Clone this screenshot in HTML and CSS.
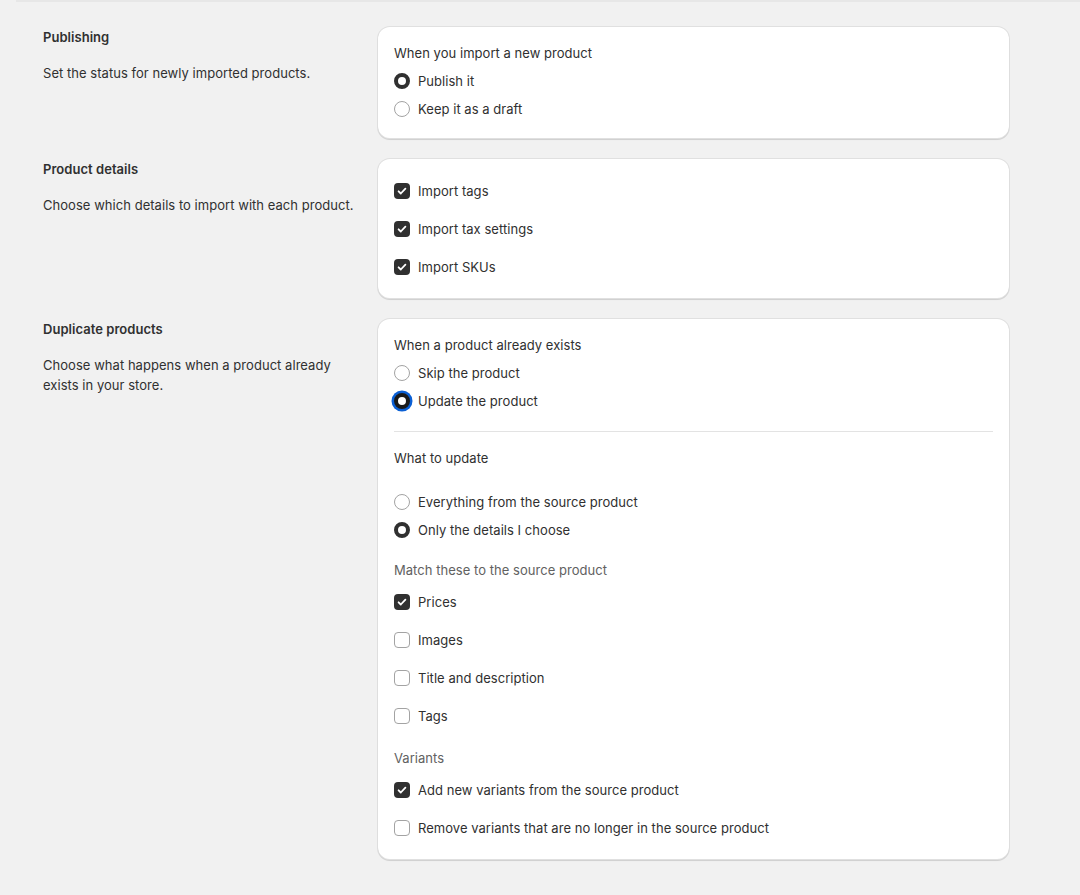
FILE: index.html
```html
<!DOCTYPE html>
<html lang="en">
<head>
<meta charset="utf-8">
<title>Import settings</title>
<link rel="stylesheet" href="styles.css">
</head>
<body>
<div class="topline"></div>
<main class="layout">
  <section class="row">
    <div class="annot">
      <h2>Publishing</h2>
      <p>Set the status for newly imported products.</p>
    </div>
    <div class="card">
      <div class="legend">When you import a new product</div>
      <ul class="radios">
        <li class="choice"><span class="radio checked"></span><span>Publish it</span></li>
        <li class="choice"><span class="radio"></span><span>Keep it as a draft</span></li>
      </ul>
    </div>
  </section>

  <section class="row">
    <div class="annot">
      <h2>Product details</h2>
      <p>Choose which details to import with each product.</p>
    </div>
    <div class="card">
      <ul class="checks">
        <li class="choice"><span class="box checked"><svg viewBox="0 0 16 16"><path d="M4.6 8.3l2.2 2.2 4.6-4.8"/></svg></span><span>Import tags</span></li>
        <li class="choice"><span class="box checked"><svg viewBox="0 0 16 16"><path d="M4.6 8.3l2.2 2.2 4.6-4.8"/></svg></span><span>Import tax settings</span></li>
        <li class="choice"><span class="box checked"><svg viewBox="0 0 16 16"><path d="M4.6 8.3l2.2 2.2 4.6-4.8"/></svg></span><span>Import SKUs</span></li>
      </ul>
    </div>
  </section>

  <section class="row">
    <div class="annot">
      <h2>Duplicate products</h2>
      <p>Choose what happens when a product already exists in your store.</p>
    </div>
    <div class="card">
      <div class="legend">When a product already exists</div>
      <ul class="radios">
        <li class="choice"><span class="radio"></span><span>Skip the product</span></li>
        <li class="choice"><span class="radio checked focused"></span><span>Update the product</span></li>
      </ul>
      <div class="divider"></div>
      <div class="legend">What to update</div>
      <ul class="radios spaced">
        <li class="choice"><span class="radio"></span><span>Everything from the source product</span></li>
        <li class="choice"><span class="radio checked"></span><span>Only the details I choose</span></li>
      </ul>
      <div class="legend subdued section">Match these to the source product</div>
      <ul class="checks after-legend">
        <li class="choice"><span class="box checked"><svg viewBox="0 0 16 16"><path d="M4.6 8.3l2.2 2.2 4.6-4.8"/></svg></span><span>Prices</span></li>
        <li class="choice"><span class="box"></span><span>Images</span></li>
        <li class="choice"><span class="box"></span><span>Title and description</span></li>
        <li class="choice"><span class="box"></span><span>Tags</span></li>
      </ul>
      <div class="legend subdued section">Variants</div>
      <ul class="checks after-legend">
        <li class="choice"><span class="box checked"><svg viewBox="0 0 16 16"><path d="M4.6 8.3l2.2 2.2 4.6-4.8"/></svg></span><span>Add new variants from the source product</span></li>
        <li class="choice"><span class="box"></span><span>Remove variants that are no longer in the source product</span></li>
      </ul>
    </div>
  </section>
</main>
</body>
</html>
```

FILE: styles.css
```css
* { box-sizing: border-box; }

html, body {
  margin: 0;
  padding: 0;
  background: #f1f1f1;
}

body {
  font-family: Inter, "Noto Sans", "Liberation Sans", sans-serif;
  font-size: 13px;
  line-height: 20px;
  letter-spacing: 0.04px;
  color: #303030;
}

.topline {
  height: 2px;
  margin-left: 16px;
  background: #e7e7e7;
}

.layout {
  display: flex;
  flex-direction: column;
  gap: 20px;
  padding: 25px 0 35px 43px;
}

.row {
  display: grid;
  grid-template-columns: 315px 631px;
  column-gap: 20px;
  align-items: start;
}

.annot h2 {
  margin: 0;
  font-size: 13px;
  line-height: 20px;
  font-weight: 600;
  color: #303030;
}

.annot p {
  margin: 16px 0 0;
  color: #303030;
}

.card {
  background: #fff;
  border-radius: 12px;
  padding: 16px;
  box-shadow:
    0 1px 1px rgba(26, 26, 26, 0.08),
    0 0 0 1px rgba(0, 0, 0, 0.07),
    inset 0 -1px 0 rgba(0, 0, 0, 0.12);
}

.legend {
  line-height: 20px;
}

.legend.subdued {
  color: #616161;
}

.legend.section {
  margin-top: 16px;
}

ul {
  list-style: none;
  margin: 0;
  padding: 0;
}

.radios {
  display: flex;
  flex-direction: column;
  margin-top: 4px;
}

.radios.spaced {
  margin-top: 20px;
}

.radios .choice {
  height: 28px;
}

.checks {
  display: flex;
  flex-direction: column;
  gap: 6px;
}

.checks.after-legend {
  margin-top: 6px;
}

.checks .choice {
  height: 32px;
}

.choice {
  display: flex;
  align-items: center;
  gap: 8px;
}

.radio {
  flex: none;
  width: 16px;
  height: 16px;
  border-radius: 50%;
  border: 1px solid #a3a3a3;
  background: #fff;
}

.radio.checked {
  border: 4px solid #303030;
}

.radio.focused {
  border-color: #1a1a1a;
  box-shadow: 0 0 0 2.5px #0a5fd4;
}

.box {
  flex: none;
  width: 16px;
  height: 16px;
  border-radius: 4px;
  border: 1px solid #a3a3a3;
  background: #fff;
  display: flex;
  align-items: center;
  justify-content: center;
}

.box.checked {
  border: none;
  background: #303030;
}

.box svg {
  width: 16px;
  height: 16px;
}

.box svg path {
  fill: none;
  stroke: #fff;
  stroke-width: 1.8;
  stroke-linecap: round;
  stroke-linejoin: round;
}

.divider {
  height: 1px;
  background: #e3e3e3;
  margin: 16px 0;
}
```
